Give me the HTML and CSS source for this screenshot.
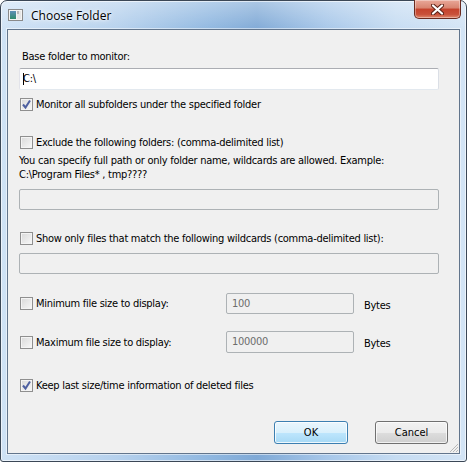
FILE: index.html
```html
<!DOCTYPE html>
<html lang="en">
    <head>
        <meta charset="UTF-8">
        <title>Choose Folder</title>
        <link rel="stylesheet" href="styles.css">
    </head>
    <body>
        <div class="window">
            <div class="titlebar">
                <svg class="app-icon" width="15" height="12" viewBox="0 0 15 12">
                    <defs>
                        <linearGradient id="pane" x1="0" y1="0" x2="0" y2="1">
                            <stop offset="0" stop-color="#5f8fb8"/>
                            <stop offset="1" stop-color="#2f8a6a"/>
                        </linearGradient>
                    </defs>
                    <rect x="0.5" y="0.5" width="14" height="11" fill="#f4f4f4" stroke="#8a8a8a"/>
                    <rect x="2" y="2" width="6" height="8" fill="url(#pane)"/>
                    <rect x="9" y="2" width="4" height="8" fill="#e6e6e6"/>
                    <rect x="9" y="2" width="2" height="3" fill="#b9b9b9"/>
                </svg>
                <span class="title">Choose Folder</span>
                <div class="close">
                    <svg width="13" height="11" viewBox="0 0 13 11">
                        <path d="M2 1.5 L11 9.5 M11 1.5 L2 9.5" stroke="#5e2318" stroke-width="4.2" stroke-linecap="round"/>
                        <path d="M2 1.5 L11 9.5 M11 1.5 L2 9.5" stroke="#fff" stroke-width="2.2" stroke-linecap="round"/>
                    </svg>
                </div>
            </div>

            <div class="client">
                <div class="text base-label">Base folder to monitor:</div>
                <div class="field base-field"><span class="caret"></span>C:\</div>

                <label class="check monitor-row">
                    <span class="box checked">
                        <svg width="11" height="11" viewBox="0 0 11 11"><path d="M2 5.5 L4.5 8.5 L9 1.5" fill="none" stroke="#4d5fa0" stroke-width="2"/></svg>
                    </span>
                    Monitor all subfolders under the specified folder
                </label>

                <label class="check exclude-row">
                    <span class="box"></span>
                    Exclude the following folders: (comma-delimited list)
                </label>
                <div class="text hint">You can specify full path or only folder name, wildcards are allowed. Example:<br>C:\Program Files* , tmp????</div>
                <div class="field disabled exclude-field"></div>

                <label class="check wildcard-row">
                    <span class="box"></span>
                    Show only files that match the following wildcards (comma-delimited list):
                </label>
                <div class="field disabled wildcard-field"></div>

                <div class="size-row min-row">
                    <label class="check"><span class="box"></span>Minimum file size to display:</label>
                    <div class="field disabled size-field">100</div>
                    <span class="unit">Bytes</span>
                </div>
                <div class="size-row max-row">
                    <label class="check"><span class="box"></span>Maximum file size to display:</label>
                    <div class="field disabled size-field">100000</div>
                    <span class="unit">Bytes</span>
                </div>

                <label class="check keep-row">
                    <span class="box checked">
                        <svg width="11" height="11" viewBox="0 0 11 11"><path d="M2 5.5 L4.5 8.5 L9 1.5" fill="none" stroke="#4d5fa0" stroke-width="2"/></svg>
                    </span>
                    Keep last size/time information of deleted files
                </label>

                <div class="buttons">
                    <button class="btn default">OK</button>
                    <button class="btn">Cancel</button>
                </div>

                <svg class="grip" width="10" height="10" viewBox="0 0 10 10">
                    <path d="M9 1 L1 9 M9 4 L4 9 M9 7 L7 9" stroke="#b8b8b8" stroke-width="1"/>
                </svg>
            </div>
        </div>
    </body>
</html>
```

FILE: styles.css
```css
body {
    margin: 0;
    font-family: "DejaVu Sans Condensed", "DejaVu Sans", sans-serif;
    font-size: 11px;
    letter-spacing: -0.27px;
    color: #000;
}

/* window frame */
.window {
    box-sizing: border-box;
    width: 467px;
    height: 462px;
    padding: 0 6px 7px 6px;
    display: flex;
    flex-direction: column;
    border: 1px solid #3b4756;
    border-radius: 7px 7px 3px 3px;
    box-shadow: inset 0 0 0 1px rgba(255, 255, 255, .6);
    background:
        linear-gradient(to bottom, rgba(255, 255, 255, .35), rgba(255, 255, 255, 0) 30px),
        linear-gradient(to right, #cfe2f5 0%, #b6d1ed 25%, #8fb7e0 45%, #7fa9d6 55%, #a7c7e9 70%, #c6dcf2 85%, #d3e4f5 100%);
}

.titlebar {
    height: 28px;
    display: flex;
    align-items: center;
}

.app-icon {
    margin-left: 1px;
}

.title {
    margin-left: 8px;
    font-family: "Open Sans", sans-serif;
    font-size: 12px;
    letter-spacing: 0;
    text-shadow: 0 0 6px #fff, 0 0 3px #fff;
}

.close {
    margin-left: auto;
    margin-right: -1px;
    margin-top: -1px;
    align-self: flex-start;
    width: 47px;
    height: 19px;
    display: flex;
    align-items: center;
    justify-content: center;
    box-sizing: border-box;
    border: 1px solid #6a2a1f;
    border-top: none;
    border-radius: 0 0 5px 5px;
    background: linear-gradient(to bottom, #e9a899 0%, #d8836f 45%, #c5422c 50%, #c9513a 80%, #e08a6f 100%);
    box-shadow: inset 0 0 0 1px rgba(255, 255, 255, .35);
}

/* client area */
.client {
    position: relative;
    flex: 1;
    padding: 20px 20px 0 11px;
    background: #f0f0f0;
    border: 1px solid #62758c;
    box-shadow: 0 0 0 1px rgba(255, 255, 255, .5);
}

.text {
    line-height: 14px;
}

.base-label {
    padding-left: 3px;
}

.field {
    box-sizing: border-box;
    height: 21px;
    padding: 0 5px;
    line-height: 19px;
    border: 1px solid #abadb3;
    border-color: #abadb3 #dbdfe6 #e3e9ef #e2e3ea;
    border-radius: 2px;
    background: #fff;
}

.field.disabled {
    background: #f0f0f0;
    border-color: #adb2b5;
    color: #6d6d6d;
}

.base-field {
    position: relative;
    margin-top: 4px;
    height: 22px;
    line-height: 20px;
    padding-left: 3px;
}

.caret {
    position: absolute;
    left: 3px;
    top: 4px;
    width: 1px;
    height: 12px;
    background: #000;
}

.check {
    display: flex;
    align-items: center;
    height: 13px;
    line-height: 13px;
    margin-left: 1px;
}

.box {
    box-sizing: border-box;
    width: 13px;
    height: 13px;
    margin-right: 3px;
    flex: none;
    display: flex;
    align-items: center;
    justify-content: center;
    border: 1px solid #8f8f8f;
    background: linear-gradient(135deg, #d9d9d9, #f8f8f8);
    box-shadow: inset 0 0 0 1px #f4f4f4;
}

.monitor-row { margin-top: 8px; }
.exclude-row { margin-top: 25px; }
.hint { margin-top: 5px; }
.exclude-field { margin-top: 7px; }
.wildcard-row { margin-top: 22px; }
.wildcard-field { margin-top: 8px; }

.size-row {
    display: grid;
    grid-template-columns: 207px 128px auto;
    align-items: center;
}

.size-row .unit {
    margin-left: 10px;
    padding-top: 3px;
}

.min-row { margin-top: 19px; }
.max-row { margin-top: 17px; }
.max-row .size-field { height: 22px; line-height: 20px; }
.keep-row { margin-top: 26px; }

.buttons {
    margin-top: 29px;
    margin-right: -9px;
    display: flex;
    justify-content: flex-end;
    gap: 27px;
}

.btn {
    box-sizing: border-box;
    width: 73px;
    height: 23px;
    padding: 0;
    font: inherit;
    color: #000;
    border: 1px solid #707070;
    border-radius: 3px;
    background: linear-gradient(to bottom, #f2f2f2 0%, #ebebeb 50%, #dddddd 51%, #cfcfcf 100%);
    box-shadow: inset 0 0 0 1px rgba(255, 255, 255, .7);
}

.btn.default {
    width: 74px;
    border-color: #3c7fb1;
    background: linear-gradient(to bottom, #eaf6fd 0%, #d9f0fc 50%, #bee6fd 51%, #a7d9f5 100%);
    box-shadow: inset 0 0 0 1px rgba(255, 255, 255, .8);
}

.grip {
    position: absolute;
    right: 0;
    bottom: 0;
}
```
